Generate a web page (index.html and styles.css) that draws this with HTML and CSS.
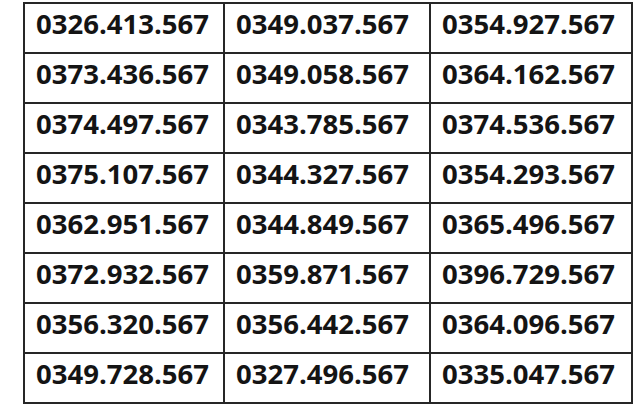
FILE: index.html
```html
<!DOCTYPE html>
<html lang="vi">
<head>
<meta charset="utf-8">
<title>Số điện thoại</title>
<link rel="stylesheet" href="styles.css">
</head>
<body>
<div class="grid">
  <div class="cell">0326.413.567</div><div class="cell">0349.037.567</div><div class="cell">0354.927.567</div>
  <div class="cell">0373.436.567</div><div class="cell">0349.058.567</div><div class="cell">0364.162.567</div>
  <div class="cell">0374.497.567</div><div class="cell">0343.785.567</div><div class="cell">0374.536.567</div>
  <div class="cell">0375.107.567</div><div class="cell">0344.327.567</div><div class="cell">0354.293.567</div>
  <div class="cell">0362.951.567</div><div class="cell">0344.849.567</div><div class="cell">0365.496.567</div>
  <div class="cell">0372.932.567</div><div class="cell">0359.871.567</div><div class="cell">0396.729.567</div>
  <div class="cell">0356.320.567</div><div class="cell">0356.442.567</div><div class="cell">0364.096.567</div>
  <div class="cell">0349.728.567</div><div class="cell">0327.496.567</div><div class="cell">0335.047.567</div>
</div>
</body>
</html>
```
FILE: styles.css
```css
html, body {
  margin: 0;
  padding: 0;
  background: #ffffff;
}
body {
  width: 640px;
  height: 411px;
  overflow: hidden;
}
.grid {
  margin: 2px 0 0 23px;
  width: 610px;
  box-sizing: border-box;
  display: grid;
  grid-template-columns: 198px 204px 200px;
  grid-auto-rows: 48px;
  gap: 2px;
  padding: 2px;
  background: #262626;
}
.cell {
  background: #ffffff;
  font-family: "Open Sans", "DejaVu Sans", sans-serif;
  font-weight: 700;
  font-size: 27.5px;
  line-height: 28px;
  color: #141414;
  padding: 6px 0 0 11px;
  white-space: nowrap;
}
```
